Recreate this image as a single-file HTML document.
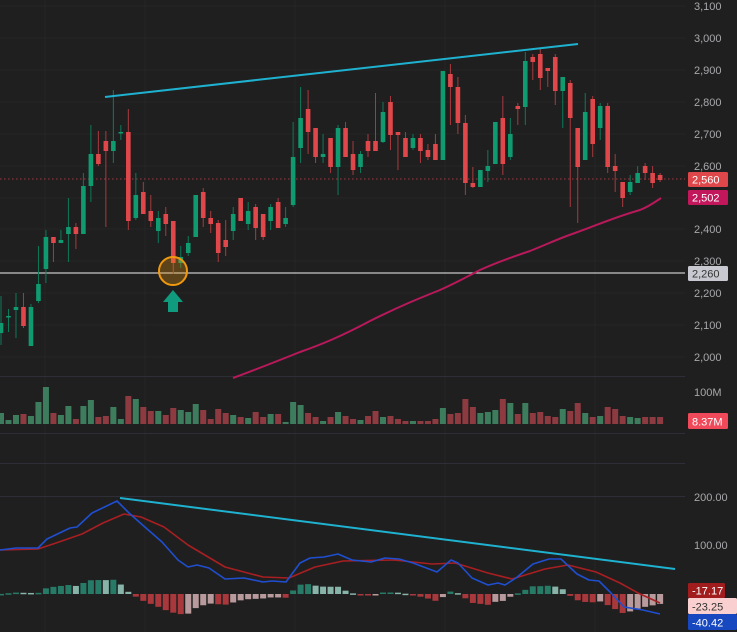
<!DOCTYPE html>
<html><head><meta charset="utf-8"><style>
html,body{margin:0;padding:0;background:#1f1f1f;width:737px;height:632px;overflow:hidden}
svg{display:block}
text{font-family:"Liberation Sans",sans-serif;font-size:11px}
</style></head><body>
<svg id="s" width="737" height="632" xmlns="http://www.w3.org/2000/svg"></svg>
<script>
var C=[[323,333,296,345],[316,316,309,332],[307,310,293,338],[307,326,293,328],[307,346,304,346],[284,301,246,303],[237,269,230,283],[237,243,237,262],[240,243,230,243],[227,234,198,262],[227,234,223,249],[186,234,173,234],[154,186,125,202],[154,164,131,166],[141,151,131,227],[141,151,90,163],[132,132,125,140],[132,221,109,230],[195,218,173,220],[192,214,182,214],[211,221,195,227],[218,231,211,243],[214,224,207,236],[221,263,221,274],[257,263,246,268],[243,253,236,256],[195,237,195,237],[192,218,188,227],[218,224,211,233],[223,253,220,262],[240,247,220,256],[214,231,207,240],[198,221,198,221],[211,224,202,230],[207,228,204,240],[214,237,214,240],[207,221,204,230],[202,228,198,228],[218,224,207,227],[157,205,122,207],[118,148,87,163],[109,132,90,154],[128,157,128,163],[154,157,134,163],[138,167,138,173],[128,167,125,195],[128,157,122,157],[154,170,141,175],[154,167,151,173],[141,151,134,157],[141,151,93,151],[112,142,102,143],[102,135,96,150],[132,135,132,170],[138,157,132,157],[138,148,134,150],[138,151,134,163],[150,157,144,160],[144,160,134,160],[71,160,71,160],[74,87,64,125],[87,123,77,134],[123,183,115,195],[183,187,167,188],[170,187,170,187],[166,171,150,182],[122,164,122,164],[118,164,96,175],[134,157,118,160],[106,109,103,125],[61,107,52,125],[57,62,54,80],[54,78,49,90],[68,71,68,87],[57,91,54,105],[77,91,77,128],[83,118,80,207],[128,167,128,223],[112,160,93,160],[99,144,96,157],[106,128,103,140],[106,167,103,173],[166,171,154,192],[182,198,182,207],[182,192,175,195],[173,183,166,183],[166,173,163,180],[173,183,166,188],[175,180,173,182]];
var G={0:1,1:1,2:1,4:1,5:1,6:1,8:1,9:1,11:1,12:1,15:1,16:1,18:1,21:1,24:1,25:1,26:1,31:1,33:1,36:1,38:1,39:1,40:1,43:1,45:1,48:1,51:1,55:1,59:1,64:1,65:1,66:1,68:1,70:1,75:1,78:1,80:1,84:1,85:1};
var V=[413,420,415,414,416,402,387,413,415,406,419,406,400,417,416,407,419,396,399,407,411,411,415,408,410,412,404,410,419,409,413,415,417,418,412,417,414,414,422,402,405,413,417,421,417,412,416,419,420,416,411,417,416,419,421,421,421,421,419,408,414,413,399,407,413,412,410,399,403,414,403,413,412,416,417,409,411,403,413,417,416,407,409,416,417,418,417,417,417];
var o='';
function X(i){return 1+i*7.49}
[6,38,70,102,134,166,198,229,261,293,325,357].forEach(function(y){o+='<line x1="0" x2="685" y1="'+y+'" y2="'+y+'" stroke="#252525"/>'});
[45,145,295,445,595].forEach(function(x){o+='<line x1="'+x+'" x2="'+x+'" y1="0" y2="632" stroke="#252525"/>'});
o+='<line x1="0" x2="737" y1="376.5" y2="376.5" stroke="#2e2e38"/><line x1="0" x2="737" y1="433.5" y2="433.5" stroke="#2e2e38"/><line x1="0" x2="737" y1="463.5" y2="463.5" stroke="#2e2e38"/><line x1="0" x2="737" y1="496.5" y2="496.5" stroke="#2e2e38"/>';
o+='<line x1="0" x2="685" y1="179" y2="179" stroke="#a03a44" stroke-dasharray="1.5,2.5"/>';
o+='<line x1="0" x2="685" y1="273" y2="273" stroke="#c8c8c8" stroke-width="1.2"/>';
o+='<path fill="none" stroke="#b8195a" stroke-width="2" d="M233,378 C260,368 280,360 300,352 C320,345 340,337 370,321 C400,306 420,298 440,290 C460,281 470,275 480,270 C500,261 515,256 530,251 C550,243 560,238 575,233 C600,224 615,217 640,210 C650,206 655,202 661,198"/>';
C.forEach(function(c,i){var x=X(i),g=G[i],col=g?'#0f9a70':'#e0474b',wc=g?'#0c7a5a':'#a83a3e';
var t=Math.min(c[0],c[1]),b=Math.max(c[0],c[1]);if(b-t<1.5)b=t+1.5;
o+='<line x1="'+x+'" x2="'+x+'" y1="'+c[2]+'" y2="'+c[3]+'" stroke="'+wc+'" stroke-width="1"/>';
o+='<rect x="'+(x-2.3)+'" y="'+t+'" width="4.6" height="'+(b-t)+'" fill="'+col+'"/>';
var vc=g?'#3d7d5e':'#8d3a41';o+='<rect x="'+(x-3)+'" y="'+V[i]+'" width="6" height="'+(424-V[i])+'" fill="'+vc+'"/>';});
o+='<line x1="105" y1="97" x2="578" y2="44" stroke="#1fb2d0" stroke-width="2"/>';
o+='<circle cx="173" cy="271" r="14" fill="rgba(240,152,14,0.3)" stroke="#f0980e" stroke-width="2"/>';
o+='<polygon points="173,290 183,302 178,302 178,312 168,312 168,302 163,302" fill="#109a7e"/>';
var B=[[0,550],[16,548],[38,548],[47,539],[70,528],[77,527],[92,513],[117,501],[129,513],[146,528],[162,542],[178,560],[188,567],[197,565],[209,568],[225,579],[244,578],[263,582],[272,581],[286,582],[300,563],[310,558],[324,557],[338,554],[352,560],[371,562],[385,558],[399,559],[413,563],[437,572],[451,560],[458,563],[472,578],[488,585],[498,583],[505,585],[516,578],[533,564],[549,559],[561,559],[577,574],[589,580],[599,581],[610,592],[624,607],[643,610],[660,614]];
var R=[[0,550],[38,549],[56,543],[82,534],[103,523],[124,514],[141,517],[164,527],[188,545],[225,567],[263,577],[289,578],[315,567],[343,561],[394,560],[432,564],[455,563],[488,573],[512,579],[545,569],[568,565],[596,572],[620,583],[638,593],[660,603]];
function I(a,x){for(var k=1;k<a.length;k++){if(x<=a[k][0]){var p=a[k-1],q=a[k];return p[1]+(q[1]-p[1])*(x-p[0])/(q[0]-p[0]);}}return a[a.length-1][1]}
var prev=0;
for(var i=0;i<89;i++){var x=X(i),h=(I(R,x)-I(B,x))*0.9;var up=h>=prev;var col=h>=0?(up?'#267a66':'#88b3a8'):(up?'#b89a9c':'#a8383c');
var y=h>=0?594-h:594,hh=Math.max(Math.abs(h),1.5);o+='<rect x="'+(x-3)+'" y="'+y+'" width="6" height="'+hh+'" fill="'+col+'"/>';prev=h;}
o+='<polyline fill="none" stroke="#a81f22" stroke-width="1.6" stroke-linejoin="round" points="'+R.join(' ')+'"/>';
o+='<polyline fill="none" stroke="#1f4fd0" stroke-width="1.6" stroke-linejoin="round" points="'+B.join(' ')+'"/>';
o+='<line x1="120" y1="498" x2="675" y2="569" stroke="#1fb2d0" stroke-width="2"/>';
o+='<rect x="685" y="0" width="52" height="632" fill="#1f1f1f"/>';
[["3,100",6],["3,000",38],["2,900",70],["2,800",102],["2,700",134],["2,600",166],["2,400",229],["2,300",261],["2,200",293],["2,100",325],["2,000",357],["100M",392],["200.00",497],["100.00",545]].forEach(function(l){o+='<text x="694" y="'+(l[1]+4)+'" fill="#a8a8ac">'+l[0]+'</text>'});
function badge(x,y,w,h,bg,fg,t){o+='<rect x="'+x+'" y="'+y+'" width="'+w+'" height="'+h+'" rx="1.5" fill="'+bg+'"/><text x="'+(x+4)+'" y="'+(y+h-3.5)+'" fill="'+fg+'" font-size="11.5">'+t+'</text>'}
badge(688,172,40,15,"#e0474b","#fff","2,560");
badge(688,190,40,15,"#c2185b","#fff","2,502");
badge(688,266,40,15,"#c8c9d0","#333","2,260");
badge(688,413,40,16,"#f04a5a","#fff","8.37M");
badge(688,583,37,15,"#a11d1d","#fff","-17.17");
badge(688,598,49,16,"#f9cfcf","#333","-23.25");
badge(688,614,49,16,"#1848c0","#fff","-40.42");
document.getElementById('s').innerHTML=o;
</script>
</body></html>
